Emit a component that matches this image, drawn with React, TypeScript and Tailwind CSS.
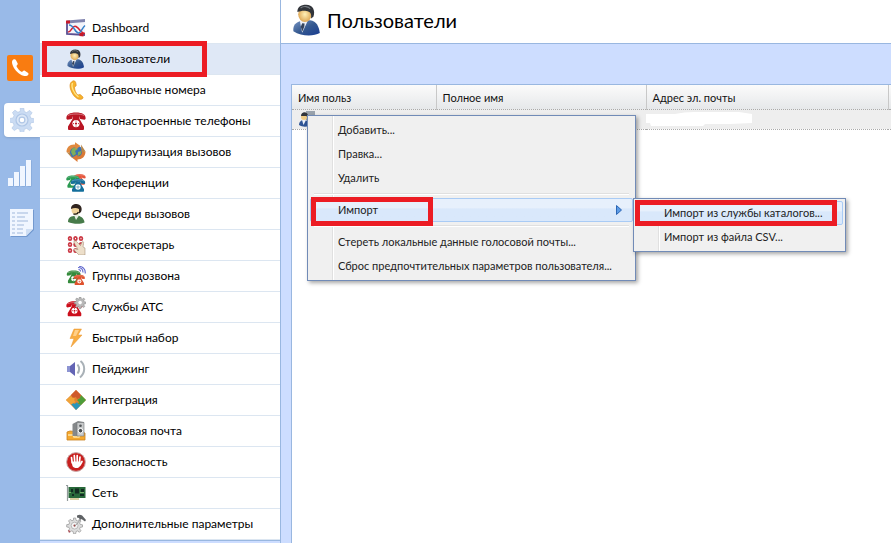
import type { ReactNode } from 'react'

function Svg({ size = 'size-5', children }: { size?: string; children: ReactNode }) {
  return (
    <svg className={`${size} shrink-0`} viewBox="0 0 20 20" fill="none" aria-hidden="true">
      {children}
    </svg>
  )
}

const handset =
  'M3.4 1.6 C1.6 2.4 1.6 5 3 8 C5 12.6 9 16.4 13.4 17.8 C15.6 18.4 17.6 17.8 18.4 16.4 C18.7 15.8 18.4 15.2 17.8 14.8 L14.8 12.8 C14.2 12.4 13.4 12.5 13 13.1 L12 14 C9.4 12.8 7.4 10.6 6.4 8 L7.4 6.8 C7.8 6.4 7.9 5.8 7.6 5.2 L6 2.2 C5.5 1.3 4.4 1.1 3.4 1.6 Z'

const gear =
  'M8.6 0h2.8l.5 3 2 .8 2.500-1.800 2 2-1.800 2.500.8 2 3 .5v2.800l-3 .5-.8 2 1.800 2.500-2 2-2.500-1.800-2 .8-.5 3H8.600l-.5-3-2-.8-2.500 1.800-2-2 1.800-2.500-.8-2-3-.5V8.800l3-.5.8-2L2.100 3.800l2-2 2.500 1.800 2-.8Z'

function Telephone({ color }: { color: string }) {
  return (
    <>
      <path d="M.500 8C-.2 4 3 1.500 10 1.500S20.200 4 19.500 8l-1 .7-4.300-.7-.7-2.400c-2-.4-5-.4-7 0L5.800 8l-4.300.7Z" fill={color} />
      <path d="M6.500 5h7v3l4.500 7.500V18q0 1-1 1H3q-1 0-1-1v-2.500L6.500 8Z" fill={color} />
      <path d="M2 4.500C5 2.500 15 2.500 18 4.500" stroke="#fff" strokeOpacity=".4" />
      <circle cx="10" cy="12.600" r="3.600" fill="#fff" />
      <circle cx="10" cy="12.600" r="1.100" fill={color} />
      <path d="M10 10v.1M10 15v.1M7.500 12.600h.1M12.400 12.600h.1" stroke={color} strokeWidth="1" strokeLinecap="round" />
    </>
  )
}

function DashboardIcon() {
  return (
    <Svg>
      <path d="M1 4v12.500l18 1V3Z" fill="#f3f4fb" />
      <path d="M1 2.500 19 1v3L1 5.500Z" fill="#8083ae" />
      <path d="M1 3v13l18 1" stroke="#5b4f91" strokeWidth="1.800" />
      <path d="M2 14C6 14 6 6.500 10 8.500s5 7 9 7" stroke="#d42230" strokeWidth="1.600" />
      <path d="M3 7c5 0 6 8 9.500 8C15 15 16 10 19 7.500" stroke="#3580c9" strokeWidth="1.500" />
      <path d="M0 2.500h4v3H0ZM13.500 15h4v3.500l-4-.5Z" fill="#c71a29" />
    </Svg>
  )
}

function UserIcon({ size }: { size?: string }) {
  return (
    <Svg size={size}>
      <defs>
        <linearGradient id="suit" x1="0" y1="0" x2="1" y2="1">
          <stop offset="0" stopColor="#7895c4" />
          <stop offset=".5" stopColor="#35598f" />
          <stop offset="1" stopColor="#183c92" />
        </linearGradient>
        <radialGradient id="face">
          <stop offset="0" stopColor="#fff0b8" />
          <stop offset="1" stopColor="#dfa957" />
        </radialGradient>
      </defs>
      <path d="M1.500 17c-.5-4 2-6 5.500-6.500l5-.3c4 .6 5.500 4 6 8-4 2.200-11.500 2.200-16.500-1.200Z" fill="url(#suit)" />
      <path d="m5.500 10.500 1.500 7.500 3.500-7.500L8.500 8.500Z" fill="#edf1f8" />
      <path d="m7 12 1.500.2-.2 2-1.200 3-1-3Z" fill="#34445e" />
      <ellipse cx="8.700" cy="6.400" rx="4.200" ry="4.800" fill="url(#face)" />
      <path d="M4 5C4 2 6 .500 9.500.500c4 0 6 3.500 4.500 7.500L12.500 9c.5-3-.5-4.500-3-4.700C7 4 6 4.600 4 5Z" fill="#31343a" />
      <path d="M6 2.500c2-1.500 5-1 6 .500" stroke="#777c83" strokeWidth=".7" />
    </Svg>
  )
}

function ExtensionIcon() {
  return (
    <Svg>
      <path
        d="M7.500 .800C4 2 3.500 5 4.500 9s4 8.500 7.500 10c2.500.8 4.500.2 5-1 .3-.8-.8-2-2.500-3.200-1-.7-2 .3-2.700.2C9.500 13 8.500 9.500 8.500 7.200c.2-.8 1.700-.8 1.700-1.800C10 3 9.500 .500 7.500 .800Z"
        fill="#f7b32b"
        stroke="#dc8d22"
        strokeWidth=".7"
      />
      <path d="M6.500 3C5 6 7 13 12.500 17" stroke="#ffe58a" strokeWidth="1.300" />
    </Svg>
  )
}

function PhoneIcon() {
  return (
    <Svg>
      <Telephone color="#b91523" />
    </Svg>
  )
}

function RoutingIcon() {
  return (
    <Svg>
      <circle cx="10" cy="10" r="6.800" fill="#3b72b4" />
      <path d="M6 6.500 10 5l2 2-3 2 1 3-3 2-2-4ZM12 10l3-1v3l-3 2Z" fill="#7fae5a" />
      <path d="M.500 10C.500 5 4 2 9 2.500V.300L14.500 4 9.500 7.500V5.500C6 5.500 4 7.500 4 11Z" fill="#e0893f" />
      <path d="M19.500 9.500c0 5-3.500 8-8 8V20L6 15.500l5.500-3 .2 2c3-.2 4.300-2 4.300-5.200Z" fill="#db7a35" />
      <path d="m15 2.500 4.500 7-4 1ZM.500 10l3.500 1 2.500 5.500Z" fill="#b98648" />
    </Svg>
  )
}

function ConferenceIcon() {
  return (
    <Svg>
      <g transform="translate(7.500 0) scale(.62)"><Telephone color="#e5553b" /></g>
      <g transform="translate(0 1.500) scale(.7)"><Telephone color="#2a9a51" /></g>
      <g transform="translate(4.500 4.500) scale(.75)"><Telephone color="#146f9c" /></g>
    </Svg>
  )
}

function QueueIcon() {
  return (
    <Svg>
      <path d="M2 18c0-4 2-5.500 6-6l4-.5c4 1.500 6 3 6.500 7-4 2-12 1.500-16.500-.5Z" fill="#477b4a" />
      <path d="m8 11 2 5 3-4.500L12 9Z" fill="#e8efe3" />
      <ellipse cx="10" cy="6" rx="4.500" ry="5" fill="#efd29a" />
      <path d="M5 5C5 1.500 7 0 10.500 0c4 0 6.500 4 4.500 8l-2 1.500V5C11 3.500 7.500 3.500 5 5Z" fill="#30241f" />
      <path d="M12.500 8c-1 2-3 2.500-5 2" stroke="#111" strokeWidth="1.300" />
    </Svg>
  )
}

function AttendantIcon() {
  return (
    <Svg>
      <g stroke="#cb3743" strokeWidth="1.700">
        {[3, 9, 15].map((y) => [4, 9.5, 15].map((x) => <ellipse key={`${x}-${y}`} cx={x} cy={y + 0.5} rx="1.400" ry="1.700" />))}
      </g>
      <path d="M8 6c1-.7 2 0 3 1l3.500 3.500L16 7c1-1 2 0 1.500 1L17 12l2 1v7h-6l-5-5c0-1 1-1.500 2-1l2 .5-4-7Z" fill="#eddfca" stroke="#9b8068" strokeWidth=".5" />
    </Svg>
  )
}

function RingGroupIcon() {
  return (
    <Svg>
      <g transform="translate(.5 3.500) scale(.72)"><Telephone color="#358b3c" /></g>
      <g transform="translate(7.500 8) scale(.58)"><Telephone color="#df512d" /></g>
      <path d="M14.500 5.500c0-1.500-.5-2-2-2M17 6.500c0-3-1.500-5-5-5M19.200 7.500c.5-5-3-7-6-7" stroke="#5a62cc" strokeWidth="1.100" />
    </Svg>
  )
}

function PbxIcon() {
  return (
    <Svg>
      <g transform="translate(0 3) scale(.85)"><Telephone color="#cc0f1c" /></g>
      <g transform="translate(8.500 0) scale(.56)">
        <path d={gear} fill="#b9b9b9" stroke="#8a8a8a" />
        <circle cx="10" cy="10" r="3.200" fill="#fff" />
      </g>
    </Svg>
  )
}

function SpeedDialIcon() {
  return (
    <Svg>
      <path d="M8 1h7.500L12 7h4L5 19l3-8.500H4Z" fill="#f8ad43" stroke="#e99632" strokeWidth=".5" />
      <path d="M9 2h4L10 8H7Z" fill="#ffd08a" />
    </Svg>
  )
}

function PagingIcon() {
  return (
    <Svg>
      <path d="M1 7h3l5-4v14l-5-4H1Z" fill="#6465b5" />
      <path d="M1 7h3v6H1Z" fill="#8d94d2" />
      <path d="M11.500 5.500c2.200 3 2.200 6 0 9M14.500 2c5 4 5 12-.5 16.500" stroke="#a9b1b7" strokeWidth="2" />
    </Svg>
  )
}

function IntegrationIcon() {
  return (
    <Svg>
      <path d="M10 0 20 10 10 20 0 10Z" fill="#e2832f" />
      <path d="m10 0 5 5-1 3-3 1-1-2-3 1-2-3Z" fill="#cf5a2c" />
      <path d="m15 5 5 5-5 5-3-1 1-2-2-2 3-2Z" fill="#4d9d3a" />
      <path d="m5 14 5 6 5-5-3-1c0-2-2-2-3 0l-2-1Z" fill="#2796ba" />
      <path d="m0 10 5-4 1.500 2c2-1 3 1 1.500 2l1.500 2L5 14.500Z" fill="#f0a438" />
    </Svg>
  )
}

function VoicemailIcon() {
  return (
    <Svg>
      <path d="m1 11 3-1 11 1 4 1v7H1Z" fill="#f6a92f" stroke="#c98120" strokeWidth=".8" />
      <path d="M2 14h5l1 2h5l1-2h4" stroke="#ffe5a6" strokeWidth="1.500" />
      <path d="m6.500 3 5.500-3 6 1v14H6.500Z" fill="#85888a" />
      <path d="M11 1.500h7V15h-7Z" fill="#c8cacb" stroke="#737779" strokeWidth=".6" />
      <circle cx="14.500" cy="4.700" r="1.300" fill="#54585a" />
      <circle cx="14.500" cy="9.700" r="2.300" fill="#4c5052" stroke="#fff" />
    </Svg>
  )
}

function SecurityIcon() {
  return (
    <Svg>
      <circle cx="10" cy="10" r="9.400" fill="#c8201f" stroke="#c9adad" />
      <path
        d="M6.200 11 5.500 5.500M8.700 9.500 8.300 3.700M11.200 9.500V3.500M13.500 10l.5-5M16 9.500l-2 3.500"
        stroke="#fff"
        strokeWidth="1.700"
        strokeLinecap="round"
      />
      <path d="M5.500 9.500h9l-.5 4.500c-.7 2.500-6 3-7.500 0Z" fill="#fff" />
    </Svg>
  )
}

function NetworkIcon() {
  return (
    <Svg>
      <path d="M0 2.500h1.500V18" stroke="#939b9b" strokeWidth="1.200" />
      <path d="M2.500 4H19.500v11H2.500Z" fill="#28683a" />
      <path d="M5 6h2v3H5ZM9 5.500h4v5H9ZM15 6h3v3h-3ZM6 11h2v2H6ZM14 11h4v2h-4Z" fill="#122c21" />
      <path d="M3 9.500h2M14 9.500h4" stroke="#73ab66" />
      <path d="M4 15h9v2H4Z" fill="#d8cfa0" />
    </Svg>
  )
}

function AdvancedIcon() {
  return (
    <Svg>
      <g transform="translate(1 4) scale(.76)">
        <path d={gear} fill="#ddd" stroke="#999" strokeWidth="1" />
        <circle cx="10" cy="10" r="4.500" fill="#f5f5f5" stroke="#aaa" />
        <circle cx="10" cy="10" r="1.500" fill="#944" />
      </g>
      <path d="M11 1.500c3-1.500 5-.5 6 1L20 6l-1 1.500L15.500 5 14 6l-1-2-2-.5Z" fill="#5f6265" />
      <path d="M9 12 15 5" stroke="#999" />
      <path d="m2 16 2.500 1-1.500 2Z" fill="#b04950" />
    </Svg>
  )
}

const navItems = [
  { label: 'Dashboard', icon: <DashboardIcon /> },
  { label: 'Пользователи', icon: <UserIcon />, active: true },
  { label: 'Добавочные номера', icon: <ExtensionIcon /> },
  { label: 'Автонастроенные телефоны', icon: <PhoneIcon /> },
  { label: 'Маршрутизация вызовов', icon: <RoutingIcon /> },
  { label: 'Конференции', icon: <ConferenceIcon /> },
  { label: 'Очереди вызовов', icon: <QueueIcon /> },
  { label: 'Автосекретарь', icon: <AttendantIcon /> },
  { label: 'Группы дозвона', icon: <RingGroupIcon /> },
  { label: 'Службы АТС', icon: <PbxIcon /> },
  { label: 'Быстрый набор', icon: <SpeedDialIcon /> },
  { label: 'Пейджинг', icon: <PagingIcon /> },
  { label: 'Интеграция', icon: <IntegrationIcon /> },
  { label: 'Голосовая почта', icon: <VoicemailIcon /> },
  { label: 'Безопасность', icon: <SecurityIcon /> },
  { label: 'Сеть', icon: <NetworkIcon /> },
  { label: 'Дополнительные параметры', icon: <AdvancedIcon /> },
]

function Rail() {
  return (
    <aside className="flex w-10 shrink-0 flex-col items-end bg-[#99bae8] pt-[55px]">
      <button aria-label="Телефон" className="mr-[7px] flex size-[26px] items-center justify-center rounded-xs bg-[#f97c11]">
        <Svg>
          <path d={handset} fill="#fff" />
        </Svg>
      </button>
      <button
        aria-label="Настройки"
        className="mt-[22px] flex h-[34px] w-9 items-center justify-center rounded-l-sm bg-white shadow-sm"
      >
        <Svg size="size-6">
          <path d={gear} fill="#cbdcf3" stroke="#b5cae7" strokeWidth=".6" />
          <circle cx="10" cy="10" r="5" fill="#dbe7f7" stroke="#afc6e6" />
          <circle cx="10" cy="10" r="2.400" fill="#fff" stroke="#afc6e6" />
        </Svg>
      </button>
      <button aria-label="Статистика" className="mt-[22px] mr-2">
        <svg width="24" height="28" viewBox="0 0 24 28" aria-hidden="true">
          <path d="M1 19h4v8H1ZM7 13h4v14H7ZM13 7h4v20h-4ZM19 1h4v26h-4Z" fill="#7c9fd2" transform="translate(.5 .5)" />
          <path d="M0 19h5v8H0ZM6 13h5v14H6ZM12 7h5v20h-5ZM18 1h5v26h-5Z" fill="#f0f6ff" />
        </svg>
      </button>
      <button aria-label="Журнал" className="mt-[22px] mr-[6px]">
        <svg width="24" height="29" viewBox="0 0 24 29" aria-hidden="true">
          <path d="M1 1h23v20l-7 7H1Z" fill="#7399cf" />
          <path d="M0 0h23v20l-7 7H0Z" fill="#f0f6ff" />
          <path d="M16 27v-7h7Z" fill="#cfdff4" />
          <path
            d="M2 4h3M7 4h11M2 8h3M7 8h8M2 12h3M7 12h11M2 16h3M7 16h7M2 20h3M7 20h6M2 24h3M7 24h6"
            stroke="#bacde7"
            strokeWidth="1.600"
          />
        </svg>
      </button>
    </aside>
  )
}

function Marker({ className }: { className: string }) {
  return <span aria-hidden="true" className={`pointer-events-none absolute z-10 border-5 border-[#ec1c24] ${className}`} />
}

function Sidebar() {
  return (
    <nav className="flex w-60 shrink-0 flex-col bg-[#cdddff]">
      <ul className="border-b border-[#99b7e0] bg-white pt-[13px]">
        {navItems.map(({ label, icon, active }) => (
          <li key={label} className="relative">
            <a
              href="#"
              className={`flex h-[31px] items-center gap-1.5 border-b border-[#dce6f1] pl-[26px] text-xs text-black ${
                active ? 'bg-[#dfe8f6]' : 'bg-white'
              }`}
            >
              {icon}
              {label}
            </a>
            {active && <Marker className="-top-[3px] left-0.5 h-9 w-[165px]" />}
          </li>
        ))}
      </ul>
    </nav>
  )
}

interface MenuItemProps {
  label: string
  selected?: boolean
  submenu?: ReactNode
  marker?: ReactNode
}

function MenuItem({ label, selected, submenu, marker }: MenuItemProps) {
  return (
    <li role="none" className="relative">
      <button
        role="menuitem"
        className={`flex h-6 w-full items-center justify-between rounded-xs border pr-2.5 pl-[27px] text-left whitespace-nowrap ${
          selected ? 'border-[#a9cbf5] bg-linear-to-b from-[#e7f0fc] from-40% to-[#d9e8fb] to-45%' : 'border-transparent'
        }`}
      >
        {label}
        {submenu && (
          <svg width="6" height="10" viewBox="0 0 6 10" aria-hidden="true">
            <path d="M.500.500 5.500 5l-5 4.500Z" fill="#5b9be6" stroke="#2c66b4" />
          </svg>
        )}
      </button>
      {marker}
      {submenu}
    </li>
  )
}

function Menu({ className, children }: { className: string; children: ReactNode }) {
  return (
    <ul
      role="menu"
      className={`absolute border border-[#718bb7] bg-[linear-gradient(90deg,transparent_24px,#e0e0e0_24px,#e0e0e0_25px,#fff_25px,#fff_26px,transparent_26px)] bg-[#f0f0f0] p-0.5 text-[11px] text-[#222] shadow-[2px_2px_4px_rgba(0,0,0,0.35)] ${className}`}
    >
      {children}
    </ul>
  )
}

function MenuSeparator() {
  return <li role="separator" className="mx-1 my-[3px] h-0.5 border-t border-b border-t-[#e0e0e0] border-b-white" />
}

function ContextMenu() {
  return (
    <Menu className="top-[30px] left-[15px] z-20 w-[329px]">
      <MenuItem label="Добавить..." />
      <MenuItem label="Правка..." />
      <MenuItem label="Удалить" />
      <MenuSeparator />
      <MenuItem
        label="Импорт"
        selected
        marker={<Marker className="-top-px left-px h-[29px] w-[122px]" />}
        submenu={
          <Menu className="top-0 left-[323px] w-[213px]">
            <MenuItem
              label="Импорт из службы каталогов..."
              selected
              marker={<Marker className="-top-px -left-px h-[26px] w-[202px]" />}
            />
            <MenuItem label="Импорт из файла CSV..." />
          </Menu>
        }
      />
      <MenuSeparator />
      <MenuItem label="Стереть локальные данные голосовой почты..." />
      <MenuItem label="Сброс предпочтительных параметров пользователя..." />
    </Menu>
  )
}

function UsersGrid() {
  return (
    <div className="relative flex-1 border-t border-l border-[#99b7e0] bg-white">
      <table className="w-full table-fixed border-collapse text-[11px]">
        <colgroup>
          <col className="w-36" />
          <col className="w-[210px]" />
          <col className="w-[242px]" />
          <col />
        </colgroup>
        <thead>
          <tr className="h-6 bg-linear-to-b from-[#fbfbfb] to-[#e6e8ea] text-left text-[#111]">
            {['Имя польз', 'Полное имя', 'Адрес эл. почты'].map((title) => (
              <th key={title} scope="col" className="border-r border-[#c8c8c8] px-1.5 pt-0.5 pb-0 font-normal">
                {title}
              </th>
            ))}
            <td />
          </tr>
        </thead>
        <tbody>
          <tr className="h-5 border-t border-b border-dotted border-[#aaa] bg-[#eee]">
            <td className="py-0 pl-1.5">
              <svg width="18" height="16" viewBox="0 0 18 16" aria-hidden="true">
                <path d="M8 0h9v9H8Z" fill="#9aa3ad" />
                <path d="M1 14c0-3 2-5 5-5s5 2 5 6c-3 1-7 1-10-1Z" fill="#2f5596" />
                <path d="m4 9 1.500 5L8 9Z" fill="#edf1f8" />
                <circle cx="6" cy="6" r="3" fill="#f0cc85" />
                <path d="M3 5c0-5 7-5 7 0v3L8.500 5Z" fill="#31343a" />
              </svg>
            </td>
            <td />
            <td className="p-0">
              <svg width="107" height="14" viewBox="0 0 107 14" aria-hidden="true">
                <path d="M0 2h29Q38 0 48 0h45l13 2v9l-22 1H59l-2 2H5l-1-3H0Z" fill="#fff" />
              </svg>
            </td>
            <td />
          </tr>
        </tbody>
      </table>
      <ContextMenu />
    </div>
  )
}

export default function App() {
  return (
    <div className="flex min-h-screen overflow-hidden bg-[#cdddff] font-[Lato,'Noto_Sans',sans-serif]">
      <Rail />
      <Sidebar />
      <main className="flex min-w-0 flex-1 flex-col border-l border-[#99b7e0]">
        <header className="flex h-11 items-center gap-1 border-b border-[#99b7e0] bg-white pb-1 pl-2.5">
          <UserIcon size="size-8" />
          <h1 className="text-xl text-black">Пользователи</h1>
        </header>
        <div className="flex flex-1 pt-10 pl-2.5">
          <UsersGrid />
        </div>
      </main>
    </div>
  )
}
